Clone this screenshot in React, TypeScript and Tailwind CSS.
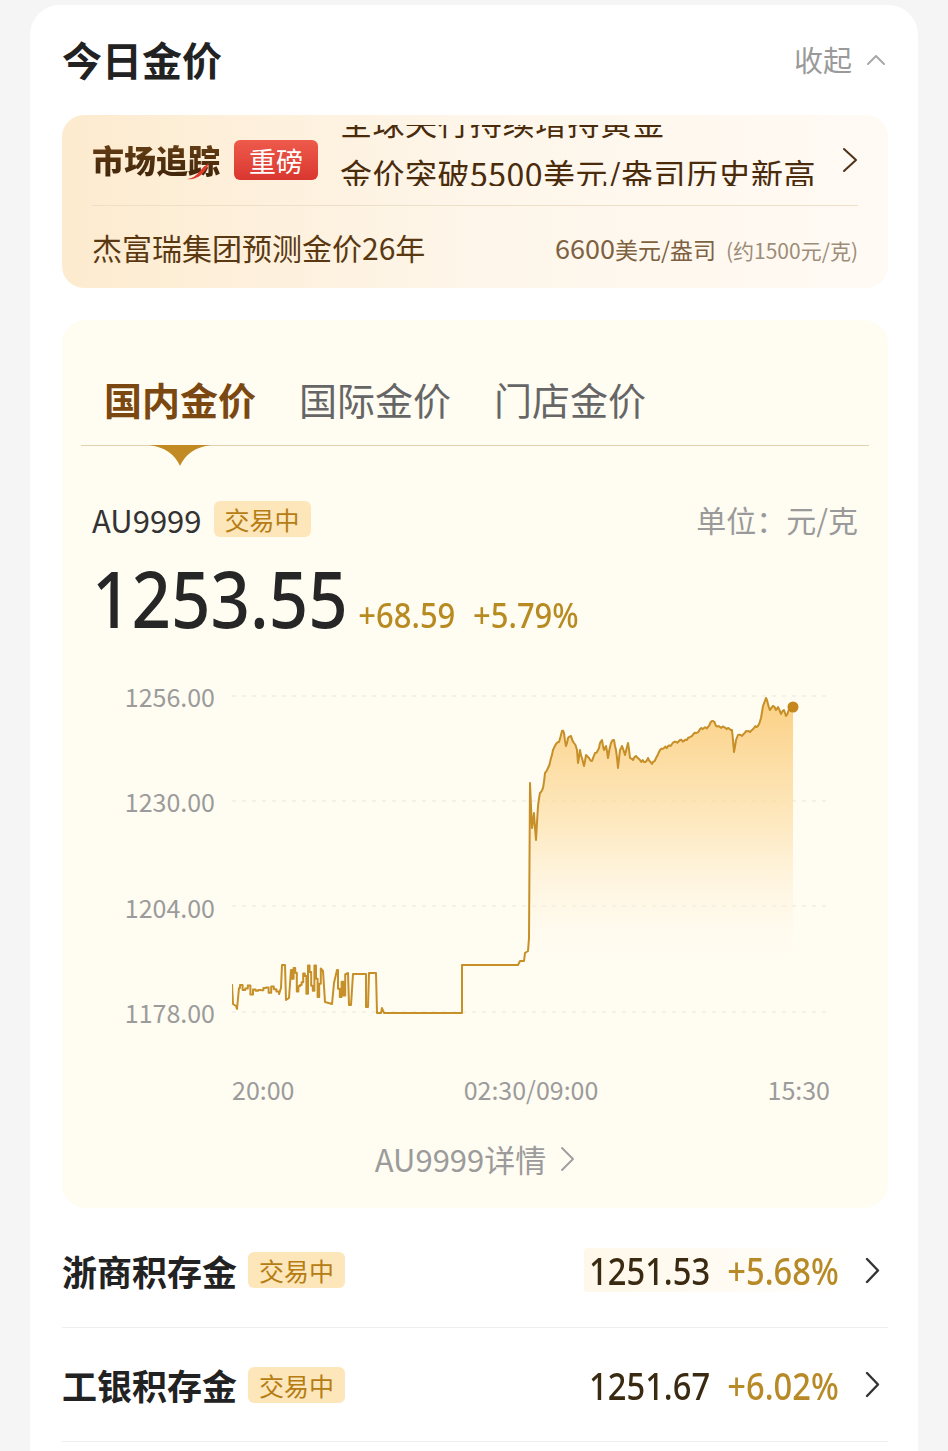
import React from "react";

const NUM = "font-['Noto_Sans','Roboto',sans-serif]";

// deterministic noise for the intraday line
function makeRandom(seed: number) {
  let s = seed;
  return () => {
    s = (s * 16807) % 2147483647;
    return (s - 1) / 2147483646;
  };
}

function buildPoints(): [number, number][] {
  const rand = makeRandom(11);
  const pts: [number, number][] = [];
  const add = (x: number, y: number) => pts.push([x, y]);

  // night session: step-like jitter
  const stepNoise = (x0: number, x1: number, lo: number, hi: number, step: number) => {
    for (let x = x0; x < x1; x += step) {
      const prev = pts[pts.length - 1];
      add(x, prev[1]);
      add(x, lo + rand() * (hi - lo));
    }
  };

  // day session: line between key points with small noise
  const walk = (keys: [number, number][], amp: number) => {
    for (let i = 0; i < keys.length - 1; i++) {
      const [xa, ya] = keys[i];
      const [xb, yb] = keys[i + 1];
      const n = Math.max(1, Math.round((xb - xa) / 1.3));
      for (let k = 0; k < n; k++) {
        const t = k / n;
        add(xa + (xb - xa) * t, ya + (yb - ya) * t + (k === 0 ? 0 : (rand() - 0.5) * amp));
      }
    }
    add(...keys[keys.length - 1]);
  };

  add(232, 986); add(233, 1006); add(236, 1008); add(237, 1011); add(239, 990);
  stepNoise(240, 280, 987, 998, 2.6);
  add(281, 990); add(282, 967); add(285, 967); add(286, 1002); add(289, 1000); add(291, 972);
  stepNoise(292, 322, 967, 1003, 1.6);
  add(323, 973); add(325, 1004); add(332, 1006); add(334, 985); add(337, 972);
  stepNoise(338, 347, 976, 1000, 1.8);
  add(348, 975); add(349, 1007); add(351, 1007); add(353, 976); add(366, 976);
  add(366, 1009); add(368, 1009); add(369, 975); add(376, 975); add(377, 1015);
  add(381, 1015); add(382, 1010); add(384, 1015); add(462, 1015); add(462, 967);
  add(518, 967); add(520, 963); add(524, 963); add(525, 955); add(528, 953); add(529, 940);

  walk(
    [
      [530, 785], [532, 830], [534, 815], [536, 842], [538, 808], [540, 795], [543, 790],
      [545, 775], [548, 770], [551, 760], [553, 752], [556, 746], [559, 744], [562, 733],
      [564, 735], [566, 748], [568, 740], [571, 738], [574, 745], [577, 752], [578, 765],
      [580, 752], [582, 760], [584, 768], [586, 757], [589, 760], [592, 763], [595, 755],
      [598, 752], [600, 745], [602, 742], [604, 752], [606, 748], [608, 760], [611, 745],
      [614, 742], [616, 752], [618, 770], [620, 752], [622, 748], [625, 757], [628, 745],
      [630, 760], [633, 762], [636, 758], [640, 762], [644, 764], [648, 760], [652, 766],
      [656, 760], [660, 752], [664, 750], [668, 748], [672, 746], [676, 744], [680, 742],
      [684, 743], [688, 740], [692, 738], [696, 735], [700, 731], [704, 730], [708, 729],
      [713, 723], [716, 728], [720, 729], [724, 729], [728, 730], [732, 732], [734, 754],
      [736, 742], [738, 737], [742, 738], [746, 733], [750, 734], [754, 730], [758, 728],
      [761, 720], [763, 708], [766, 700], [768, 706], [770, 712], [773, 708], [776, 712],
      [778, 709], [781, 716], [784, 712], [786, 718], [789, 711], [793, 709],
    ],
    3
  );
  return pts;
}

function GoldChart() {
  const pts = buildPoints().map(([x, y]) => [x - 232, y - 680]);
  const line = pts.map((p, i) => (i ? "L" : "M") + p[0].toFixed(1) + " " + p[1].toFixed(1)).join(" ");
  const last = pts[pts.length - 1];
  const area = line + ` L${last[0].toFixed(1)} 334 L0 334 Z`;

  return (
    <svg width="598" height="352" viewBox="0 0 598 352" className="block">
      <defs>
        <linearGradient id="goldFill" x1="0" y1="20" x2="0" y2="300" gradientUnits="userSpaceOnUse">
          <stop offset="0" stopColor="#fbcd7c" stopOpacity="0.95" />
          <stop offset="0.45" stopColor="#fde0aa" stopOpacity="0.7" />
          <stop offset="1" stopColor="#fffdf5" stopOpacity="0" />
        </linearGradient>
      </defs>
      {[18, 123, 228, 334].map((y) => (
        <line key={y} x1="0" x2="598" y1={y} y2={y} stroke="#ebe5d6" strokeWidth="1.2" strokeDasharray="4 6" />
      ))}
      <path d={area} fill="url(#goldFill)" />
      <path d={line} fill="none" stroke="#c68f27" strokeWidth="2" strokeLinejoin="round" />
      <circle cx={last[0]} cy={last[1]} r="5.5" fill="#c5861b" />
    </svg>
  );
}

function Chip() {
  return (
    <span className="inline-flex h-[36px] items-center rounded-[6px] bg-[#fde6ba] px-[11px] text-[25px] leading-[36px] text-[#b57d14]">
      交易中
    </span>
  );
}

function ChevronRight(props: { color: string; w?: number; h?: number; sw?: number }) {
  const w = props.w ?? 15;
  const h = props.h ?? 26;
  return (
    <svg width={w} height={h} viewBox={`0 0 ${w} ${h}`} className="block shrink-0">
      <polyline
        points={`2,2 ${w - 2},${h / 2} 2,${h - 2}`}
        fill="none"
        stroke={props.color}
        strokeWidth={props.sw ?? 2.2}
        strokeLinecap="round"
        strokeLinejoin="round"
      />
    </svg>
  );
}

function SavingsRow(props: { name: string; price: string; change: string; flash?: boolean; first?: boolean }) {
  return (
    <div className={"flex items-center border-b border-[#efefef] " + (props.first ? "mt-[5px] h-[115px]" : "h-[114px]")}>
      <span className="text-[35px] font-semibold leading-none text-[#222]">{props.name}</span>
      <span className="ml-[11px]">
        <Chip />
      </span>
      {/* numbers are narrowed to match the app's condensed digits */}
      <div
        className={
          "ml-auto flex h-[44px] origin-right scale-x-[0.86] items-center gap-[20px] rounded-[4px] pl-[6px] pr-[10px] " +
          (props.flash ? "bg-gradient-to-r from-[#fff8ea] via-[#fffbf3] to-[#ffffff]" : "")
        }
      >
        <span className={NUM + " text-[38px] font-medium leading-none text-[#3a2a12]"}>{props.price}</span>
        <span className={NUM + " text-[38px] font-medium leading-none text-[#b88a27]"}>{props.change}</span>
      </div>
      <div className="ml-[18px] mr-[8px]">
        <ChevronRight color="#333333" w={15} h={27} sw={2.4} />
      </div>
    </div>
  );
}

export default function App() {
  return (
    <div className="min-h-screen bg-[#f5f5f5] px-[30px] pt-[5px] font-['Noto_Sans_CJK_SC','Noto_Sans',sans-serif]">
      <div className="min-h-[1446px] rounded-t-[30px] bg-white pl-8 pr-[30px] pt-[20px]">
        {/* header */}
        <div className="flex h-[68px] items-center justify-between">
          <h1 className="text-[40px] font-bold leading-none text-[#222]">今日金价</h1>
          <div className="flex items-center gap-[14px] pr-[2px] text-[29px] leading-none text-[#9a9a9a]">
            <span>收起</span>
            <svg width="20" height="13" viewBox="0 0 20 13" className="block">
              <polyline points="2,11 10,3 18,11" fill="none" stroke="#a8a8a8" strokeWidth="2" strokeLinecap="round" strokeLinejoin="round" />
            </svg>
          </div>
        </div>

        {/* market tracking banner */}
        <div className="mt-[22px] rounded-[22px] bg-gradient-to-r from-[#fdebcf] via-[#fef6ea] to-[#fffaf4]">
          <div className="flex h-[90px] items-center px-[30px]">
            <div className="relative shrink-0">
              <span className="bg-gradient-to-b from-[#6e4518] to-[#3c2108] bg-clip-text text-[32px] font-black leading-none text-transparent">
                市场追踪
              </span>
              <svg width="24" height="18" viewBox="0 0 24 18" className="absolute left-[94px] top-[19px]">
                <path d="M1 17 Q9 16 14 9 Q18 4 23 1 Q20 9 15 13 Q9 18 1 17 Z" fill="#e0392c" />
              </svg>
            </div>
            <span className="ml-[14px] flex h-[40px] shrink-0 items-center rounded-[6px] bg-gradient-to-b from-[#ee5a4b] to-[#d9362f] px-[15px] text-[27px] leading-none text-white">
              重磅
            </span>
            <div className="ml-[22px] mt-[10px] h-[61px] flex-1 self-start overflow-hidden">
              <div className="-mt-[30px] text-[32px] tracking-[0.5px] text-[#4a2b0b]">
                <div className="h-[52px] whitespace-nowrap leading-[52px]">全球央行持续增持黄金</div>
                <div className="h-[52px] whitespace-nowrap leading-[52px]">金价突破5500美元/盎司历史新高</div>
              </div>
            </div>
            <div className="ml-[10px]">
              <ChevronRight color="#4d3219" w={16} h={26} sw={2} />
            </div>
          </div>
          <div className="mx-[30px] h-px bg-[#eedfc8]" />
          <div className="flex h-[82px] items-center justify-between px-[30px]">
            <span className="text-[30px] leading-none text-[#5a3912]">杰富瑞集团预测金价26年</span>
            <span className="flex items-baseline leading-none text-[#7d6140]">
              <span className="text-[27px]">6600</span>
              <span className="text-[23px]">美元/盎司</span>
              <span className="ml-[10px] text-[21px] text-[#9c8d78]">(约1500元/克)</span>
            </span>
          </div>
        </div>

        {/* price card */}
        <div className="mt-[32px] rounded-[24px] bg-[#fffcf2] pb-[29px] pt-[53px]">
          <div className="mx-[19px] flex gap-[43px] border-b border-[#dfd2ae] pl-[23px]">
            <div className="relative pb-[20px] text-[38px] font-bold leading-[52px] text-[#7a4810]">
              国内金价
              <svg width="62" height="21" viewBox="0 0 62 21" className="absolute left-1/2 top-full -translate-x-1/2">
                <path d="M0 0 L62 0 Q39 3 31 21 Q23 3 0 0 Z" fill="#c28a22" />
              </svg>
            </div>
            <div className="pb-[20px] text-[38px] leading-[52px] text-[#666]">国际金价</div>
            <div className="pb-[20px] text-[38px] leading-[52px] text-[#666]">门店金价</div>
          </div>

          <div className="mt-[55px] flex h-[36px] items-center justify-between px-[30px]">
            <div className="flex items-center gap-[12px]">
              <span className="text-[31px] leading-none text-[#333]">AU9999</span>
              <Chip />
            </div>
            <span className="text-[30px] leading-none text-[#9a9a9a]">单位：元/克</span>
          </div>

          <div className="mt-[21px] px-[30px]">
            <div className="flex origin-left scale-x-[0.885] items-baseline">
              <span className={NUM + " text-[78px] font-medium leading-[80px] text-[#262626]"}>1253.55</span>
              <span className={NUM + " ml-[12px] text-[35px] font-medium leading-none text-[#b88a22]"}>+68.59</span>
              <span className={NUM + " ml-[20px] text-[35px] font-medium leading-none text-[#b88a22]"}>+5.79%</span>
            </div>
          </div>

          <div className="mt-[40px] flex">
            <div className="flex h-[352px] w-[170px] flex-col justify-between pr-[17px] text-right text-[25px] text-[#9b9b9b]">
              <span className="h-[36px] leading-[36px]">1256.00</span>
              <span className="h-[36px] leading-[36px]">1230.00</span>
              <span className="h-[36px] leading-[36px]">1204.00</span>
              <span className="h-[36px] leading-[36px]">1178.00</span>
            </div>
            <GoldChart />
          </div>

          <div className="ml-[170px] mt-[43px] flex w-[598px] justify-between text-[25px] leading-[32px] text-[#9b9b9b]">
            <span>20:00</span>
            <span>02:30/09:00</span>
            <span>15:30</span>
          </div>

          <div className="mt-[34px] flex items-center justify-center gap-[14px] text-[31px] leading-[40px] text-[#9b9b9b]">
            <span>AU9999详情</span>
            <ChevronRight color="#a0a0a0" w={15} h={26} sw={2} />
          </div>
        </div>

        <SavingsRow name="浙商积存金" price="1251.53" change="+5.68%" flash first />
        <SavingsRow name="工银积存金" price="1251.67" change="+6.02%" />
      </div>
    </div>
  );
}
